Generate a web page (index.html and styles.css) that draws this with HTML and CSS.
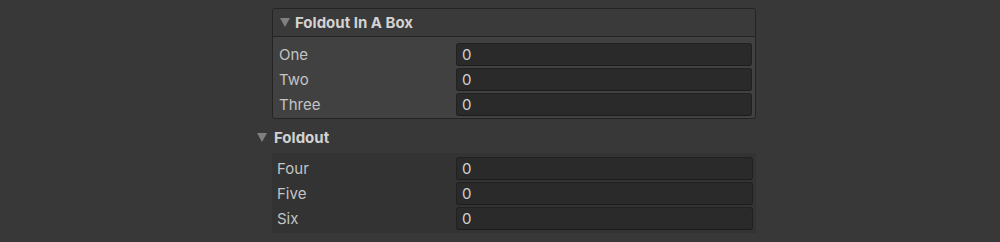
FILE: index.html
```html
<!DOCTYPE html>
<html lang="en">
<head>
  <meta charset="UTF-8">
  <title>Foldouts</title>
  <link rel="stylesheet" href="styles.css">
</head>
<body>
  <div class="inspector">
    <div class="box">
      <div class="box-header">
        <span class="arrow"></span>
        <span class="title">Foldout In A Box</span>
      </div>
      <div class="box-body">
        <div class="row"><span class="label">One</span><input class="field" type="text" value="0"></div>
        <div class="row"><span class="label">Two</span><input class="field" type="text" value="0"></div>
        <div class="row"><span class="label">Three</span><input class="field" type="text" value="0"></div>
      </div>
    </div>

    <div class="foldout">
      <div class="foldout-header">
        <span class="arrow"></span>
        <span class="title">Foldout</span>
      </div>
      <div class="foldout-body">
        <div class="row"><span class="label">Four</span><input class="field" type="text" value="0"></div>
        <div class="row"><span class="label">Five</span><input class="field" type="text" value="0"></div>
        <div class="row"><span class="label">Six</span><input class="field" type="text" value="0"></div>
      </div>
    </div>
  </div>
</body>
</html>
```

FILE: styles.css
```css
* {
  box-sizing: border-box;
}
body {
  margin: 0;
  background: #383838;
  font-family: Inter, 'Noto Sans', sans-serif;
  font-size: 15px;
  color: #c4c4c4;
}
.inspector {
  width: 500px;
  margin-left: 256px;
  padding-top: 8px;
}
.arrow {
  width: 0;
  height: 0;
  border-left: 5.5px solid transparent;
  border-right: 5.5px solid transparent;
  border-top: 9px solid #808080;
}
.title {
  font-weight: 700;
  color: #d2d2d2;
}
.box {
  margin-left: 16px;
  width: 484px;
  background: #414141;
  border: 1px solid #242424;
  border-radius: 3px;
}
.box-header {
  display: flex;
  align-items: center;
  gap: 5px;
  height: 28px;
  padding-left: 7px;
  background: #3a3a3a;
  border-bottom: 1px solid #242424;
  border-radius: 3px 3px 0 0;
}
.box-body {
  display: flex;
  flex-direction: column;
  gap: 2px;
  padding: 6px 3px 2px 6px;
}
.row {
  display: flex;
  align-items: center;
  height: 23px;
}
.label {
  width: 177px;
  flex: none;
}
.field {
  flex: 1;
  height: 23px;
  margin: 0;
  padding: 0 5px;
  background: #2a2a2a;
  border: 1px solid #212121;
  border-bottom-color: #1c1c1c;
  border-radius: 3px;
  color: #d2d2d2;
  font-family: inherit;
  font-size: 15px;
  outline: none;
}
.foldout {
  margin-top: 7px;
}
.foldout-header {
  display: flex;
  align-items: center;
  gap: 7px;
  height: 22px;
  padding-left: 1px;
}
.foldout-body {
  margin-left: 16px;
  margin-top: 5px;
  width: 484px;
  display: flex;
  flex-direction: column;
  gap: 2px;
  padding: 4px 3px 3px 5px;
  background: #333333;
}
.foldout-body .label {
  width: 179px;
}
```
